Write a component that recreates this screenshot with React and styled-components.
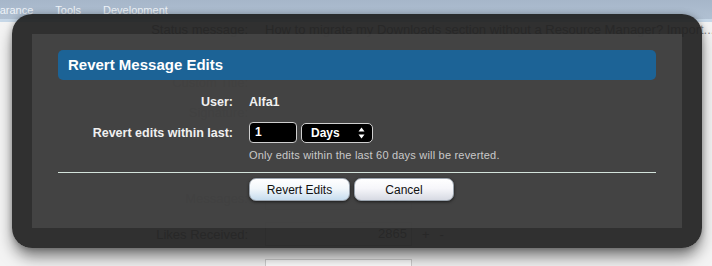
import React from 'react';
import styled, { createGlobalStyle } from 'styled-components';

const GlobalStyle = createGlobalStyle`
  html, body {
    margin: 0;
    padding: 0;
  }
  body {
    background: #f3f3f3;
    font-family: "Liberation Sans", Arial, sans-serif;
    overflow: hidden;
  }
`;

const Page = styled.div`
  position: relative;
  width: 712px;
  height: 266px;
  overflow: hidden;
  background: #f4f4f4;
`;

const NavBar = styled.div`
  height: 19px;
  display: flex;
  align-items: center;
  gap: 22px;
  background: linear-gradient(#a6b6c9, #b1c1d3);
  color: #eef3f8;
  font-size: 11px;
  white-space: nowrap;
`;

const NavTab = styled.span`
  &:first-child {
    margin-left: -26px;
  }
`;

const SubBar = styled.div`
  height: 3px;
  background: #c7d8e8;
`;

const BgRow = styled.div`
  display: grid;
  grid-template-columns: 248px 1fr;
  column-gap: 17px;
  align-items: center;
  height: ${(p) => p.$h || 14}px;
  margin-top: ${(p) => p.$mt || 0}px;
  font-size: 13px;
  white-space: nowrap;
  color: #8a8a8a;
`;

const BgLabel = styled.div`
  text-align: right;
`;

const BgValue = styled.div`
  color: #888;
  overflow: hidden;
`;

const BgHint = styled.div`
  grid-column: 2;
  font-size: 11px;
  color: #aaa;
`;

const BgField = styled.div`
  display: flex;
  align-items: center;
  gap: 10px;
`;

const BgInput = styled.div`
  width: 147px;
  height: 24px;
  box-sizing: border-box;
  border: 1px solid #d0d0d0;
  background: #fff;
  text-align: right;
  padding-right: 4px;
  line-height: 22px;
  color: #888;
`;

const Overlay = styled.div`
  position: absolute;
  left: 12px;
  top: 14px;
  width: 690px;
  height: 234px;
  box-sizing: border-box;
  padding: 20px;
  border-radius: 20px;
  background: rgba(32, 32, 32, 0.93);
  box-shadow: 0 10px 16px -2px rgba(0, 0, 0, 0.55), 0 0 6px rgba(0, 0, 0, 0.25);
`;

const Panel = styled.div`
  height: 100%;
  box-sizing: border-box;
  padding: 16px 26px 0;
  background: rgba(75, 75, 75, 0.7);
`;

const TitleBar = styled.h2`
  margin: 0;
  height: 30px;
  line-height: 30px;
  padding-left: 10px;
  border-radius: 5px;
  background: #1c6396;
  color: #fff;
  font-size: 15px;
  font-weight: bold;
`;

const FormRow = styled.div`
  display: grid;
  grid-template-columns: 175px 1fr;
  column-gap: 16px;
  align-items: center;
  margin-top: ${(p) => p.$mt}px;
`;

const Label = styled.div`
  text-align: right;
  color: #f0f0f0;
  font-size: 12.5px;
  font-weight: bold;
  line-height: 18px;
`;

const Value = styled.div`
  color: #f0f0f0;
  font-size: 12.5px;
  font-weight: bold;
  line-height: 18px;
`;

const Controls = styled.div`
  display: flex;
  align-items: center;
  gap: 4px;
`;

const NumberInput = styled.div`
  width: 48px;
  height: 21px;
  box-sizing: border-box;
  padding-left: 5px;
  border: 1px solid #cfcfcf;
  border-radius: 4px;
  background: #000;
  color: #fff;
  font-size: 12px;
  font-weight: bold;
  line-height: 19px;
`;

const Select = styled.div`
  width: 72px;
  height: 20px;
  box-sizing: border-box;
  display: flex;
  align-items: center;
  justify-content: space-between;
  padding: 0 7px 0 9px;
  border: 1px solid #cfcfcf;
  border-radius: 5px;
  background: #000;
  color: #fff;
  font-size: 12px;
  font-weight: bold;
`;

const Hint = styled.div`
  grid-column: 2;
  color: #c9c9c9;
  font-size: 11px;
  letter-spacing: 0.2px;
  line-height: 14px;
`;

const Divider = styled.div`
  margin-top: 10px;
  border-top: 1px solid #d3e3db;
`;

const ButtonRow = styled.div`
  display: flex;
  gap: 4px;
  margin-top: 5px;
  padding-left: 191px;
`;

const Button = styled.button`
  width: ${(p) => p.$w}px;
  height: 23px;
  padding: 0;
  border: 1px solid #9aa3ad;
  border-radius: 7px;
  font-family: "Liberation Sans", Arial, sans-serif;
  font-size: 12px;
  color: #111;
  background: ${(p) =>
    p.$primary
      ? 'linear-gradient(#ffffff, #f2f7fb 45%, #c6dcee)'
      : 'linear-gradient(#ffffff, #f6f6fa 45%, #d7dae3)'};
  box-shadow: 0 1px 3px rgba(0, 0, 0, 0.6);
`;

const SelectArrows = () => (
  <svg width="7" height="12" viewBox="0 0 7 12">
    <path d="M3.5 0.5 L6.5 4.5 L0.5 4.5 Z" fill="#fff" />
    <path d="M3.5 11.5 L6.5 7.5 L0.5 7.5 Z" fill="#fff" />
  </svg>
);

const App = () => {
  return (
    <>
      <GlobalStyle />
      <Page>
        <NavBar>
          <NavTab>Appearance</NavTab>
          <NavTab>Tools</NavTab>
          <NavTab>Development</NavTab>
        </NavBar>
        <SubBar />
        <BgRow>
          <BgLabel>Status message:</BgLabel>
          <BgValue>How to migrate my Downloads section without a Resource Manager? Import...</BgValue>
        </BgRow>
        <BgRow $mt={39}>
          <BgLabel>Custom Title:</BgLabel>
          <BgValue />
        </BgRow>
        <BgRow $mt={16}>
          <BgLabel>Signature:</BgLabel>
          <BgValue />
        </BgRow>
        <BgRow $mt={2} $h={12}>
          <BgHint>You may use BB code</BgHint>
        </BgRow>
        <BgRow $mt={53} $h={24}>
          <BgLabel>Messages:</BgLabel>
          <BgField>
            <BgInput>1532</BgInput>
            <span>+</span>
            <span>-</span>
          </BgField>
        </BgRow>
        <BgRow $mt={12} $h={24}>
          <BgLabel>Likes Received:</BgLabel>
          <BgField>
            <BgInput>2865</BgInput>
            <span>+</span>
            <span>-</span>
          </BgField>
        </BgRow>
        <BgRow $mt={13} $h={24}>
          <BgLabel>Trophy Points:</BgLabel>
          <BgField>
            <BgInput>172</BgInput>
          </BgField>
        </BgRow>

        <Overlay>
          <Panel>
            <TitleBar>Revert Message Edits</TitleBar>
            <FormRow $mt={13}>
              <Label>User:</Label>
              <Value>Alfa1</Value>
            </FormRow>
            <FormRow $mt={11}>
              <Label>Revert edits within last:</Label>
              <Controls>
                <NumberInput>1</NumberInput>
                <Select>
                  <span>Days</span>
                  <SelectArrows />
                </Select>
              </Controls>
            </FormRow>
            <FormRow $mt={5}>
              <Hint>Only edits within the last 60 days will be reverted.</Hint>
            </FormRow>
            <Divider />
            <ButtonRow>
              <Button $primary $w={101}>Revert Edits</Button>
              <Button $w={100}>Cancel</Button>
            </ButtonRow>
          </Panel>
        </Overlay>
      </Page>
    </>
  );
};

export default App;
